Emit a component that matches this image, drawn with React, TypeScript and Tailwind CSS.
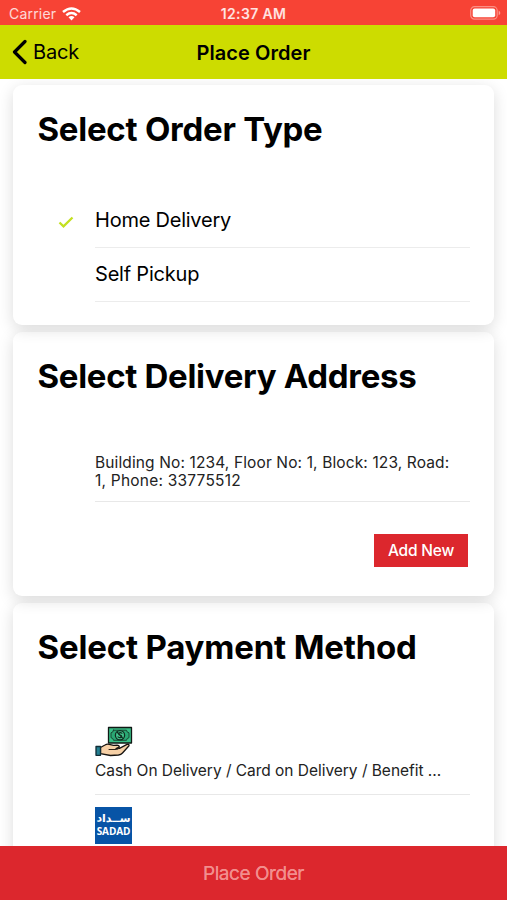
import React from "react";

const cardShadow = "shadow-[0_4px_16px_rgba(0,0,0,0.14)]";

function WifiIcon() {
  return (
    <svg className="ml-[6px] h-[14px] w-[19px]" viewBox="0 0 19 14" fill="none" stroke="#fff" strokeWidth="2.500">
      <path d="M1 5Q9.500 -2 18 5" />
      <path d="M4.300 8.200Q9.500 3.900 14.700 8.200" />
      <path d="M6.500 10.300Q9.500 7.700 12.500 10.300L9.500 13.500Z" fill="#fff" stroke="none" />
    </svg>
  );
}

function BatteryIcon() {
  return (
    <svg className="-mt-px h-[14px] w-[31px]" viewBox="0 0 31 14" fill="none">
      <rect x="0.700" y="0.700" width="26.500" height="12.400" rx="3.800" stroke="#fb8f85" strokeWidth="1.200" />
      <rect x="2.700" y="2.500" width="22.500" height="8.800" rx="2" fill="#fff" />
      <path d="M28.700 4.600Q32 7 28.700 9.300Z" fill="#fb9b92" />
    </svg>
  );
}

function CashIcon() {
  return (
    <svg className="block h-[37px] w-[38px]" viewBox="0 0 38 37" strokeLinejoin="round" strokeLinecap="round">
      <rect x="13.500" y="4.500" width="23" height="15.500" fill="#38bf86" stroke="#101915" strokeWidth="1.300" />
      <path d="M18.500 7.200H31.500Q31.700 9.600 34 9.800V14.700Q31.700 15 31.500 17.300H18.500Q18.300 15 16 14.700V9.800Q18.300 9.600 18.500 7.200Z" fill="#2aa874" stroke="#173c2b" strokeWidth="0.900" />
      <circle cx="25" cy="12.200" r="4.600" fill="#45c88f" stroke="#102e21" strokeWidth="1.300" />
      <path d="M27 10.200Q25 9 23.800 10.300Q23.200 11.800 25.300 12.200Q27.500 12.800 26.400 14.200Q24.800 15.400 23 13.900M22.500 9.500L27.500 15" fill="none" stroke="#102e21" strokeWidth="1.200" />
      <path d="M5.500 24.500L10 22Q12 20.700 14.300 21.400L18.500 22.300L22 22.200Q24.500 22.300 24.200 24L21 25.500L24.500 25.300L32 21.400Q34.500 20.800 34 22.700L27.500 30Q26 31.700 23.500 32L15.500 32.500L5.500 30.700Z" fill="#f6d0a6" stroke="#161310" strokeWidth="1.300" />
      <path d="M14 26.500H21.500Q24 26.300 24.200 24" fill="none" stroke="#2d2118" strokeWidth="1" />
      <path d="M1 23.500H5.500V32.300H1Z" fill="#247f91" stroke="#102c35" strokeWidth="1.300" />
    </svg>
  );
}

function SadadLogo() {
  return (
    <div className="flex h-[37px] w-[37px] flex-col items-center overflow-hidden bg-[#0754a6] text-white">
      <span dir="rtl" className="mt-[5px] h-[13px] font-['DejaVu_Sans',sans-serif] text-[11px] leading-[13px] font-bold whitespace-nowrap">ســداد</span>
      <span className="font-['Open_Sans',sans-serif] text-[10px] leading-[12px] font-bold tracking-[-0.100px] whitespace-nowrap">SADAD</span>
    </div>
  );
}

function Title({ children }: { children: React.ReactNode }) {
  return <h2 className="pl-[24.500px] text-[33px] leading-[40px] font-bold whitespace-nowrap">{children}</h2>;
}

export default function App() {
  return (
    <div className="flex h-[900px] w-[507px] flex-col overflow-hidden bg-white font-[Inter,sans-serif] text-black">
      <div className="grid h-[25px] shrink-0 grid-cols-3 items-center bg-[#f74335] px-[9px] pt-[2px] text-white">
        <div className="flex items-center text-[14px] tracking-[0.200px] text-white/80">
          <span>Carrier</span>
          <WifiIcon />
        </div>
        <div className="text-center text-[14px] font-semibold tracking-[0.350px] whitespace-nowrap text-white/85">12:37 AM</div>
        <div className="-mr-[3px] flex justify-end"><BatteryIcon /></div>
      </div>

      <header className="grid h-[54px] shrink-0 grid-cols-[1fr_auto_1fr] items-center bg-[#cddc00] px-[12px]">
        <button className="flex items-center text-left text-[20px] tracking-[-0.200px]">
          <svg className="mr-[6px] h-[26px] w-[15px]" viewBox="0 0 15 26" fill="none" stroke="#000" strokeWidth="3.200" strokeLinecap="round" strokeLinejoin="round">
            <path d="M13 2.500L2.500 13L13 23.500" />
          </svg>
          Back
        </button>
        <h1 className="pt-px text-[20px] font-semibold tracking-[0.050px]">Place Order</h1>
        <span />
      </header>

      <main className="flex min-h-0 flex-1 flex-col gap-[7px] overflow-hidden px-[13px] pt-[6px]">
        <section className={`relative z-30 h-[240px] shrink-0 rounded-[9px] bg-white pt-[24px] ${cardShadow}`}>
          <Title><span className="tracking-[-0.250px]">Select Order Type</span></Title>
          <div className="mt-[45px] mr-[24px] ml-[42px]">
            <div className="flex h-[54px]">
              <div className="flex w-[40px] items-center pl-[3px]">
                <svg className="mt-[2px] h-[14px] w-[16px]" viewBox="0 0 16 14" fill="none" stroke="#c3e020" strokeWidth="2.300">
                  <path d="M1.500 7.500L5.500 11.300L14.500 2.500" />
                </svg>
              </div>
              <div className="flex flex-1 items-center border-b border-[#ececec] pb-[2px] text-[20px] tracking-[-0.230px]">Home Delivery</div>
            </div>
            <div className="ml-[40px] flex h-[54px] items-center border-b border-[#ececec] pb-[2px] text-[20px] tracking-[-0.200px]">Self Pickup</div>
          </div>
        </section>

        <section className={`relative z-20 h-[264px] shrink-0 rounded-[9px] bg-white pt-[24px] ${cardShadow}`}>
          <Title><span className="tracking-[-0.300px]">Select Delivery Address</span></Title>
          <div className="mt-[58px] mr-[24px] ml-[82px] h-[48px] border-b border-[#e8e8e8] text-[15.500px] leading-[18px] text-[#222]">
            <p className="tracking-[0.125px] whitespace-nowrap">Building No: 1234, Floor No: 1, Block: 123, Road:</p>
            <p className="tracking-[0.220px] whitespace-nowrap">1, Phone: 33775512</p>
          </div>
          <div className="mt-[32px] mr-[26px] flex justify-end">
            <button className="h-[33px] w-[94px] bg-[#dc272d] text-[15.500px] font-medium tracking-[-0.200px] whitespace-nowrap text-white">Add New</button>
          </div>
        </section>

        <section className={`relative z-10 h-[420px] shrink-0 rounded-[9px] bg-white pt-[24px] ${cardShadow}`}>
          <Title><span className="tracking-[-0.180px]">Select Payment Method</span></Title>
          <div className="mt-[56px] mr-[24px] ml-[82px]">
            <div className="h-[72px] border-b border-[#e8e8e8]">
              <CashIcon />
              <p className="mt-[1px] text-[15.500px] leading-[20px] tracking-[-0.030px] whitespace-nowrap text-[#222]">Cash On Delivery / Card on Delivery / Benefit ...</p>
            </div>
            <div className="pt-[12px]"><SadadLogo /></div>
          </div>
        </section>
      </main>

      <footer className="relative z-40 flex h-[54px] shrink-0 items-center justify-center bg-[#dc272d] pt-[2px] text-[19px] tracking-[-0.450px] text-[#f28e8d]">
        <span className="[text-shadow:0_0_0.500px_#f28e8d]">Place Order</span>
      </footer>
    </div>
  );
}
